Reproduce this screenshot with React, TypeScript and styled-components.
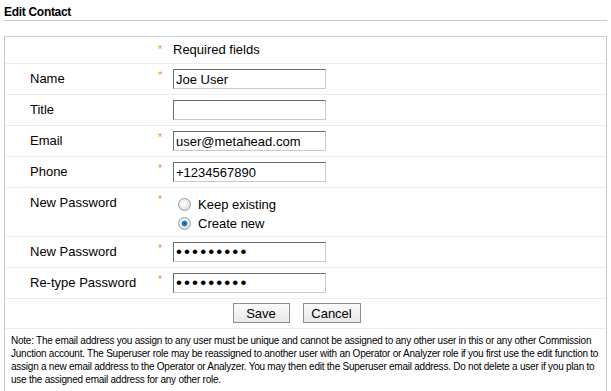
import React from "react";
import styled, { createGlobalStyle } from "styled-components";

const Global = createGlobalStyle`
  html, body { margin: 0; padding: 0; background: #fff; }
  body { font-family: "Liberation Sans", Arial, sans-serif; color: #000; }
`;

const Page = styled.div`
  padding: 4px 4px 0 4px;
  width: 603px;
`;

const Heading = styled.h1`
  margin: 0;
  font-size: 12px;
  font-weight: bold;
  letter-spacing: -0.3px;
  line-height: 14px;
  padding: 1px 0 0 0;
  height: 15px;
  border-bottom: 1px solid #c8c8c8;
`;

const Box = styled.div`
  margin-top: 15px;
  border: 1px solid #c8c8c8;
  border-top-color: #cfcfcf;
`;

const Row = styled.div<{ $h: number }>`
  display: grid;
  grid-template-columns: 149px 19px 1fr;
  height: ${(p) => p.$h}px;
  box-sizing: border-box;
  border-bottom: 1px solid #ececec;
  font-size: 13px;
`;

const Label = styled.div`
  padding: 7px 0 0 25px;
  line-height: 15px;
`;

const Star = styled.div<{ $top?: number }>`
  color: #f7931e;
  font-size: 11px;
  padding: ${(p) => p.$top ?? 5}px 0 0 4px;
  line-height: 12px;
`;

const Field = styled.div`
  padding-top: 5px;
`;

const HeaderText = styled.div`
  padding-top: 5px;
  line-height: 15px;
`;

const Input = styled.input`
  box-sizing: border-box;
  width: 153px;
  height: 20px;
  margin: 0;
  padding: 1px 2px 0 2px;
  font-family: "Liberation Sans", Arial, sans-serif;
  font-size: 13px;
  color: #000;
  border: 1px solid #c9c9c9;
  border-top-color: #6b6b6b;
  border-left-color: #6b6b6b;
  outline: none;
  background: #fff;
  &[type="password"] {
    font-size: 17px;
    letter-spacing: 2.1px;
    padding: 0 2px 0 2px;
  }
`;

const RadioList = styled.div`
  padding: 10px 0 0 5px;
  display: flex;
  flex-direction: column;
  gap: 6px;
`;

const RadioLine = styled.label`
  display: flex;
  align-items: center;
  gap: 7px;
  line-height: 13px;
  font-size: 13px;
`;

const Radio = styled.input`
  appearance: none;
  -webkit-appearance: none;
  margin: 0;
  width: 13px;
  height: 13px;
  border-radius: 50%;
  border: 1px solid #9a9a9a;
  box-sizing: border-box;
  background: radial-gradient(circle at 45% 40%, #ffffff 0%, #f2f2f2 35%, #cfcfcf 100%);
  &:checked {
    background:
      radial-gradient(circle at 50% 50%, #0d4f8a 0%, #2a86c8 28%, #4aa2dc 36%, transparent 42%),
      radial-gradient(circle at 45% 40%, #ffffff 0%, #f2f2f2 35%, #cfcfcf 100%);
  }
`;

const ButtonRow = styled.div`
  display: flex;
  justify-content: center;
  gap: 13px;
  height: 30px;
  box-sizing: border-box;
  padding: 4px 18px 0 0;
  border-bottom: 1px solid #ececec;
`;

const Button = styled.button<{ $w: number }>`
  box-sizing: border-box;
  height: 20px;
  padding: 0;
  font-family: "Liberation Sans", Arial, sans-serif;
  font-size: 13px;
  color: #000;
  background: linear-gradient(#fbfbfb, #e9e9e9);
  border: 1px solid #8e8e8e;
  border-radius: 0;
  width: ${(p) => p.$w}px;
`;

const Note = styled.p`
  margin: 0;
  padding: 5px 0 6px 6px;
  font-size: 10px;
  line-height: 13px;
  letter-spacing: -0.24px;
  white-space: nowrap;
  color: #000;
`;

type TextRow = { label: string; req: boolean; value: string; type?: string };

const rowsTop: TextRow[] = [
  { label: "Name", req: true, value: "Joe User" },
  { label: "Title", req: false, value: "" },
  { label: "Email", req: true, value: "user@metahead.com" },
  { label: "Phone", req: true, value: "+1234567890" },
];

const rowsBottom: TextRow[] = [
  { label: "New Password", req: true, value: "123456789", type: "password" },
  { label: "Re-type Password", req: true, value: "123456789", type: "password" },
];

const noteLines = [
  "Note: The email address you assign to any user must be unique and cannot be assigned to any other user in this or any other Commission",
  "Junction account. The Superuser role may be reassigned to another user with an Operator or Analyzer role if you first use the edit function to",
  "assign a new email address to the Operator or Analyzer. You may then edit the Superuser email address. Do not delete a user if you plan to",
  "use the assigned email address for any other role.",
];

function FieldRow({ r }: { r: TextRow }) {
  return (
    <Row $h={31}>
      <Label>{r.label}</Label>
      <Star>{r.req ? "*" : ""}</Star>
      <Field>
        <Input type={r.type ?? "text"} defaultValue={r.value} readOnly />
      </Field>
    </Row>
  );
}

export default function App() {
  return (
    <>
      <Global />
      <Page>
        <Heading>Edit Contact</Heading>
        <Box>
          <Row $h={27}>
            <div />
            <Star $top={6}>*</Star>
            <HeaderText>Required fields</HeaderText>
          </Row>
          {rowsTop.map((r) => (
            <FieldRow key={r.label} r={r} />
          ))}
          <Row $h={49}>
            <Label>New Password</Label>
            <Star>*</Star>
            <RadioList>
              <RadioLine>
                <Radio type="radio" name="pw" readOnly />
                Keep existing
              </RadioLine>
              <RadioLine>
                <Radio type="radio" name="pw" defaultChecked />
                Create new
              </RadioLine>
            </RadioList>
          </Row>
          {rowsBottom.map((r) => (
            <FieldRow key={r.label} r={r} />
          ))}
          <ButtonRow>
            <Button $w={57}>Save</Button>
            <Button $w={58}>Cancel</Button>
          </ButtonRow>
          <Note>
            {noteLines.map((l, i) => (
              <React.Fragment key={i}>
                {l}
                {i < noteLines.length - 1 && <br />}
              </React.Fragment>
            ))}
          </Note>
        </Box>
      </Page>
    </>
  );
}
